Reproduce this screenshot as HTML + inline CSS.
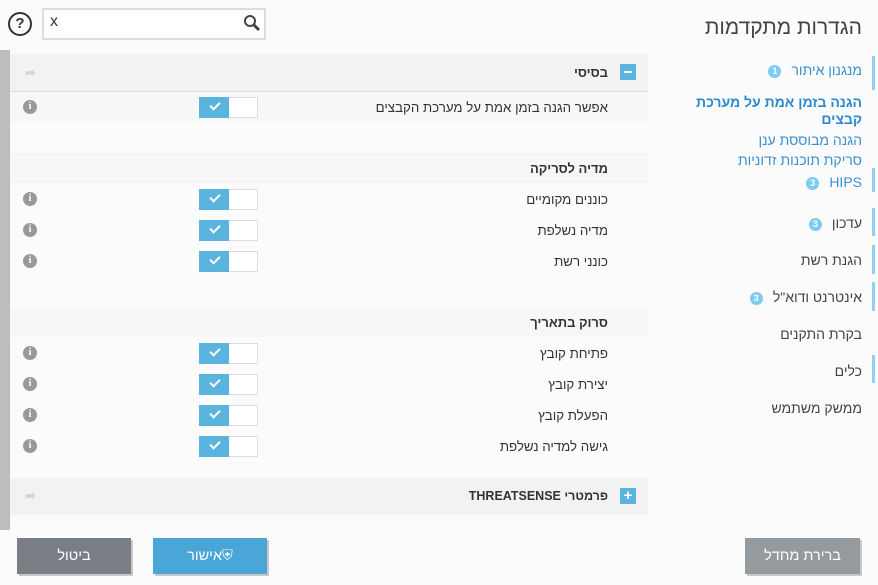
<!DOCTYPE html>
<html><head><meta charset="utf-8"><style>
*{margin:0;padding:0;box-sizing:border-box}
body{width:878px;height:585px;background:#fbfbfb;font-family:"Liberation Sans","Noto Sans CJK SC",sans-serif;position:relative;overflow:hidden;color:#333}
.a{position:absolute}
.r{position:absolute;direction:rtl;white-space:nowrap}
.side{right:16px;font-size:14px;color:#444}
.bar{position:absolute;left:872px;width:3px;background:#8fd0f3}
.badge{display:inline-block;width:13px;height:13px;border-radius:50%;background:#7ccbf3;color:#fff;font-size:9px;font-weight:bold;text-align:center;line-height:13px;margin-right:10px;vertical-align:1px}
.lbl{right:270px;font-size:13.3px;color:#333}
.hd{right:270px;font-size:13px;font-weight:bold;color:#333}
.tg{position:absolute;left:199px;width:59px;height:21px;border:1px solid #ddd;background:#fff}
.tg:before{content:"";position:absolute;left:-1px;top:-1px;width:30px;height:21px;background:#5bb4dd}
.tg:after{content:"";position:absolute;left:10px;top:4px;width:8px;height:4px;border-left:2px solid #fff;border-bottom:2px solid #fff;transform:rotate(-45deg)}
.inf{position:absolute;left:23px;width:14px;height:14px;border-radius:50%;background:#999;color:#fff;font-size:10px;font-weight:bold;text-align:center;line-height:14px;font-family:"Liberation Serif",serif}
.btn{position:absolute;height:36px;color:#fff;font-size:14.5px;text-align:center;line-height:36px;box-shadow:2px 2px 0 #c8c8c8;direction:rtl}
</style></head><body>
<div class="a" style="left:8px;top:12px;width:24px;height:24px;border:2px solid #333;border-radius:50%;text-align:center;font-weight:bold;font-size:15px;line-height:20px">?</div>
<div class="a" style="left:42px;top:8px;width:224px;height:32px;border:2px solid #ddd;background:#fff"></div>
<div class="a" style="left:50px;top:13px;font-size:16px;color:#333">x</div>
<svg class="a" style="left:243px;top:14px" width="18" height="18"><circle cx="7" cy="7" r="5" fill="none" stroke="#444" stroke-width="2"/><line x1="11" y1="11" x2="16" y2="16" stroke="#444" stroke-width="3"/></svg>

<div class="r" style="right:16px;top:16px;font-size:21px;color:#444">הגדרות מתקדמות</div>
<div class="r side" style="top:62px;color:#3a8fd0">מנגנון איתור<span class="badge">1</span></div>
<div class="r side" style="top:94px;font-weight:bold;color:#2a8ad0;line-height:17px;width:170px;white-space:normal">הגנה בזמן אמת על מערכת קבצים</div>
<div class="r side" style="top:132px;color:#3a8fd0">הגנה מבוססת ענן</div>
<div class="r side" style="top:152px;color:#3a8fd0">סריקת תוכנות זדוניות</div>
<div class="r side" style="top:174px;color:#3a8fd0">HIPS<span class="badge">3</span></div>
<div class="r side" style="top:215px">עדכון<span class="badge">3</span></div>
<div class="r side" style="top:252px">הגנת רשת</div>
<div class="r side" style="top:289px">אינטרנט ודוא"ל<span class="badge">3</span></div>
<div class="r side" style="top:326px">בקרת התקנים</div>
<div class="r side" style="top:363px">כלים</div>
<div class="r side" style="top:400px">ממשק משתמש</div>
<div class="bar" style="top:56px;height:34px"></div>
<div class="bar" style="top:168px;height:24px"></div>
<div class="bar" style="top:208px;height:28px"></div>
<div class="bar" style="top:245px;height:29px"></div>
<div class="bar" style="top:282px;height:29px"></div>
<div class="bar" style="top:355px;height:28px"></div>

<div class="a" style="left:0;top:50px;width:10px;height:480px;background:#bdbdbd"></div>
<div class="a" style="left:10px;top:54px;width:638px;height:38px;background:#f2f2f2;border-bottom:1px solid #ddd"></div>
<div class="a" style="left:620px;top:64px;width:16px;height:16px;background:#5bb4dd"><div style="position:absolute;left:4px;top:7px;width:8px;height:2px;background:#fff"></div></div>
<div class="r hd" style="top:65px">בסיסי</div>
<div class="a" style="left:25px;top:65px;color:#d5d5d5;font-size:13px;font-weight:bold">➦</div>
<div class="a" style="left:10px;top:92px;width:638px;height:30px;background:#f7f7f7"></div>
<div class="a" style="left:10px;top:153px;width:638px;height:30px;background:#f7f7f7"></div>
<div class="a" style="left:10px;top:307px;width:638px;height:30px;background:#f7f7f7"></div>

<div class="r lbl" style="top:100px">אפשר הגנה בזמן אמת על מערכת הקבצים</div>
<div class="tg" style="top:97px"></div><div class="inf" style="top:100px">i</div>
<div class="r hd" style="top:161px">מדיה לסריקה</div>
<div class="r lbl" style="top:192px">כוננים מקומיים</div><div class="tg" style="top:189px"></div><div class="inf" style="top:192px">i</div>
<div class="r lbl" style="top:223px">מדיה נשלפת</div><div class="tg" style="top:220px"></div><div class="inf" style="top:223px">i</div>
<div class="r lbl" style="top:254px">כונני רשת</div><div class="tg" style="top:251px"></div><div class="inf" style="top:254px">i</div>
<div class="r hd" style="top:315px">סרוק בתאריך</div>
<div class="r lbl" style="top:346px">פתיחת קובץ</div><div class="tg" style="top:343px"></div><div class="inf" style="top:346px">i</div>
<div class="r lbl" style="top:377px">יצירת קובץ</div><div class="tg" style="top:374px"></div><div class="inf" style="top:377px">i</div>
<div class="r lbl" style="top:408px">הפעלת קובץ</div><div class="tg" style="top:405px"></div><div class="inf" style="top:408px">i</div>
<div class="r lbl" style="top:439px">גישה למדיה נשלפת</div><div class="tg" style="top:436px"></div><div class="inf" style="top:439px">i</div>

<div class="a" style="left:10px;top:478px;width:638px;height:37px;background:#f2f2f2"></div>
<div class="a" style="left:620px;top:488px;width:16px;height:16px;background:#5bb4dd;color:#fff;text-align:center;font-size:15px;line-height:16px;font-weight:bold">+</div>
<div class="r hd" style="top:489px;font-size:12.5px">פרמטרי THREATSENSE</div>
<div class="a" style="left:25px;top:488px;color:#d5d5d5;font-size:13px;font-weight:bold">➦</div>

<div class="btn" style="left:17px;top:538px;width:114px;background:#7a7f86">ביטול</div>
<div class="btn" style="left:153px;top:538px;width:114px;background:#4aa6d6">⛨אישור</div>
<div class="btn" style="left:745px;top:538px;width:115px;background:#959a9f">ברירת מחדל</div>
</body></html>
